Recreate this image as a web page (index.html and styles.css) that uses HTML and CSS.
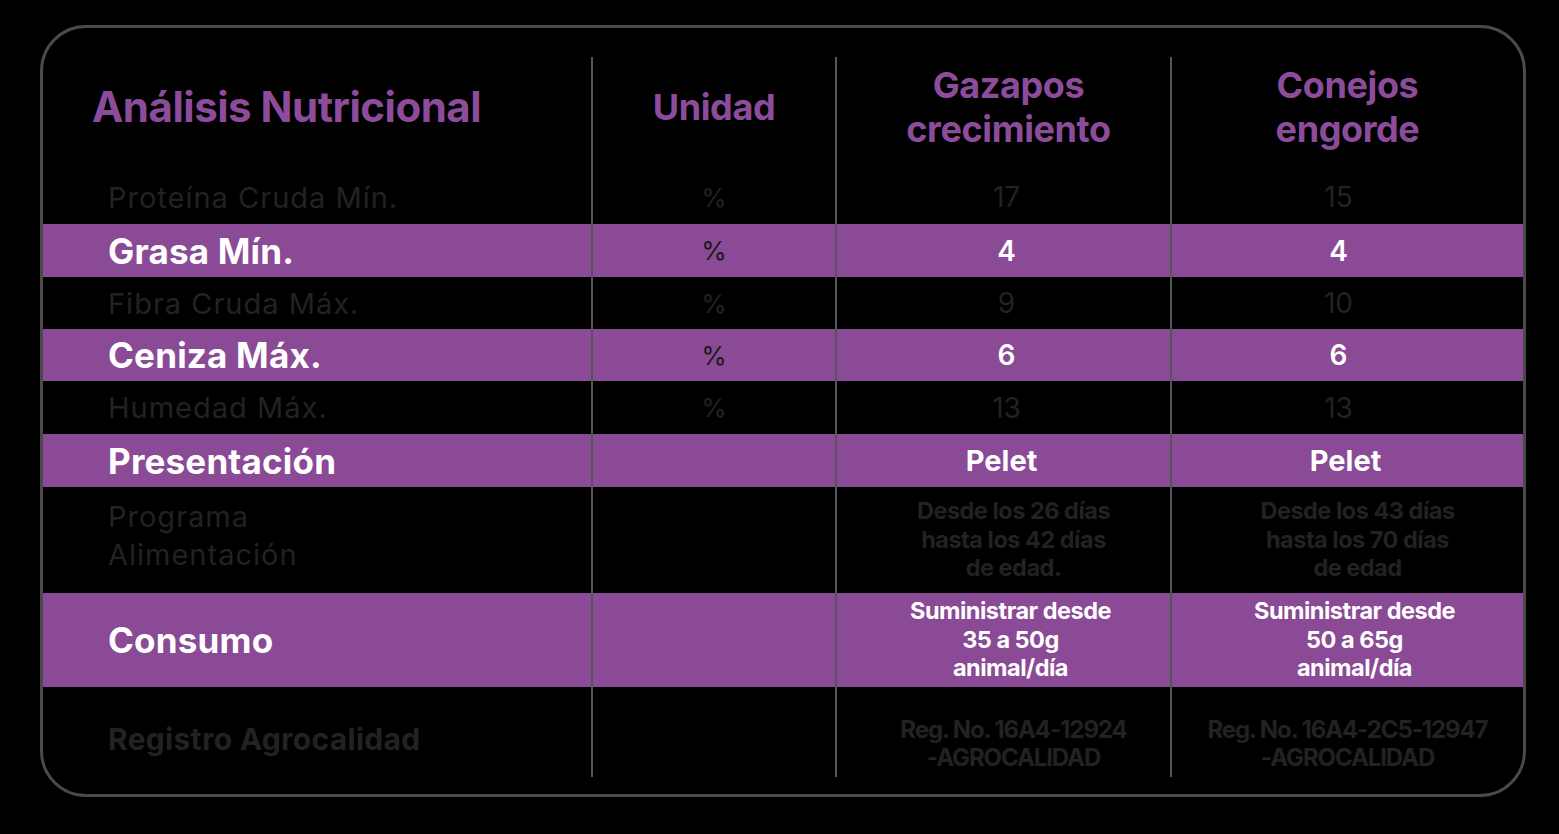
FILE: index.html
```html
<!DOCTYPE html>
<html lang="es">
<head>
<meta charset="utf-8">
<title>Análisis Nutricional</title>
<link rel="stylesheet" href="styles.css">
</head>
<body>
<div class="frame">
  <div class="table">
    <div class="cell head first"><span class="title">Análisis Nutricional</span></div>
    <div class="cell head sep"><span class="htext">Unidad</span></div>
    <div class="cell head sep c3"><span class="htext">Gazapos<br>crecimiento</span></div>
    <div class="cell head sep c4"><span class="htext">Conejos<br>engorde</span></div>

    <div class="cell row-a first dim label">Proteína Cruda Mín.</div>
    <div class="cell row-a sep dim unit">%</div>
    <div class="cell row-a sep dim num c3">17</div>
    <div class="cell row-a sep dim num c4">15</div>

    <div class="cell row-a first hl label strong">Grasa Mín.</div>
    <div class="cell row-a sep hl unit dark">%</div>
    <div class="cell row-a sep hl num strong c3">4</div>
    <div class="cell row-a sep hl num strong c4">4</div>

    <div class="cell row-a first dim label">Fibra Cruda Máx.</div>
    <div class="cell row-a sep dim unit">%</div>
    <div class="cell row-a sep dim num c3">9</div>
    <div class="cell row-a sep dim num c4">10</div>

    <div class="cell row-a first hl label strong">Ceniza Máx.</div>
    <div class="cell row-a sep hl unit dark">%</div>
    <div class="cell row-a sep hl num strong c3">6</div>
    <div class="cell row-a sep hl num strong c4">6</div>

    <div class="cell row-a first dim label">Humedad Máx.</div>
    <div class="cell row-a sep dim unit">%</div>
    <div class="cell row-a sep dim num c3">13</div>
    <div class="cell row-a sep dim num c4">13</div>

    <div class="cell row-a first hl label strong">Presentación</div>
    <div class="cell row-a sep hl"></div>
    <div class="cell row-a sep hl pel">Pelet</div>
    <div class="cell row-a sep hl pel">Pelet</div>

    <div class="cell row-p first dim label two">Programa<br>Alimentación</div>
    <div class="cell row-p sep"></div>
    <div class="cell row-p sep dim note">Desde los 26 días<br>hasta los 42 días<br>de edad.</div>
    <div class="cell row-p sep dim note">Desde los 43 días<br>hasta los 70 días<br>de edad</div>

    <div class="cell row-c first hl label strong">Consumo</div>
    <div class="cell row-c sep hl"></div>
    <div class="cell row-c sep hl note white">Suministrar desde<br>35 a 50g<br>animal/día</div>
    <div class="cell row-c sep hl note white">Suministrar desde<br>50 a 65g<br>animal/día</div>

    <div class="cell row-r first dim label bold">Registro Agrocalidad</div>
    <div class="cell row-r sep"></div>
    <div class="cell row-r sep dim reg c3">Reg. No. 16A4-12924<br>-AGROCALIDAD</div>
    <div class="cell row-r sep dim reg">Reg. No. 16A4-2C5-12947<br>-AGROCALIDAD</div>
  </div>
</div>
</body>
</html>
```

FILE: styles.css
```css
* { box-sizing: border-box; }

html, body {
  margin: 0;
  padding: 0;
  background: #000;
}

body {
  font-family: "Inter", "Lato", "Noto Sans", sans-serif;
  width: 1559px;
  height: 834px;
  padding: 25px 0 0 40px;
}

.frame {
  width: 1486px;
  height: 772px;
  border: 3px solid #4a4a4a;
  border-radius: 46px;
  padding: 29px 0 17px 0;
}

.table {
  display: grid;
  grid-template-columns: 548px 244px 335px 353px;
  grid-template-rows: 113px 54px 53px 52px 52px 53px 53px 106px 94px 90px;
}

.cell {
  display: flex;
  align-items: center;
  justify-content: center;
  text-align: center;
}

.cell.sep {
  border-left: 2px solid #555;
}

.cell.first {
  justify-content: flex-start;
  text-align: left;
  padding-left: 65px;
}

.head.first {
  padding-left: 49px;
}

.head.c3 {
  padding-left: 10px;
}

.num.c3 {
  padding-left: 6px;
}

.num.c4 {
  padding-right: 18px;
}

.title {
  color: #8d4c9b;
  font-weight: 700;
  font-size: 42px;
  letter-spacing: -0.5px;
  margin-top: -14px;
}

.htext {
  color: #8d4c9b;
  font-weight: 700;
  font-size: 36px;
  line-height: 44px;
  letter-spacing: -0.4px;
  margin-top: -14px;
}

.hl {
  background: #8a4a96;
}

.dim {
  color: #222;
}

.label {
  font-size: 29px;
  font-weight: 400;
  letter-spacing: 1px;
}

.label.strong {
  color: #fff;
  font-weight: 700;
  font-size: 35px;
  letter-spacing: 0.2px;
}

.label.bold {
  font-weight: 700;
  font-size: 30px;
  letter-spacing: 0.3px;
  padding-top: 14px;
}

.label.two {
  line-height: 38px;
  padding-bottom: 8px;
}

.unit {
  font-size: 26px;
  font-weight: 400;
}

.unit.dark {
  color: #1a1a1a;
}

.num {
  font-size: 28px;
  font-weight: 400;
}

.num.strong {
  color: #fff;
  font-weight: 600;
}

.pel {
  color: #fff;
  font-size: 29px;
  font-weight: 700;
  padding-right: 4px;
}

.note {
  font-size: 23.5px;
  font-weight: 700;
  line-height: 28.5px;
  letter-spacing: -0.5px;
  padding-left: 20px;
}

.note.white {
  color: #fff;
  padding-left: 14px;
}

.reg {
  font-size: 24px;
  font-weight: 700;
  line-height: 28px;
  letter-spacing: -1.1px;
  padding-top: 24px;
}

.reg.c3 {
  padding-left: 20px;
}
```
